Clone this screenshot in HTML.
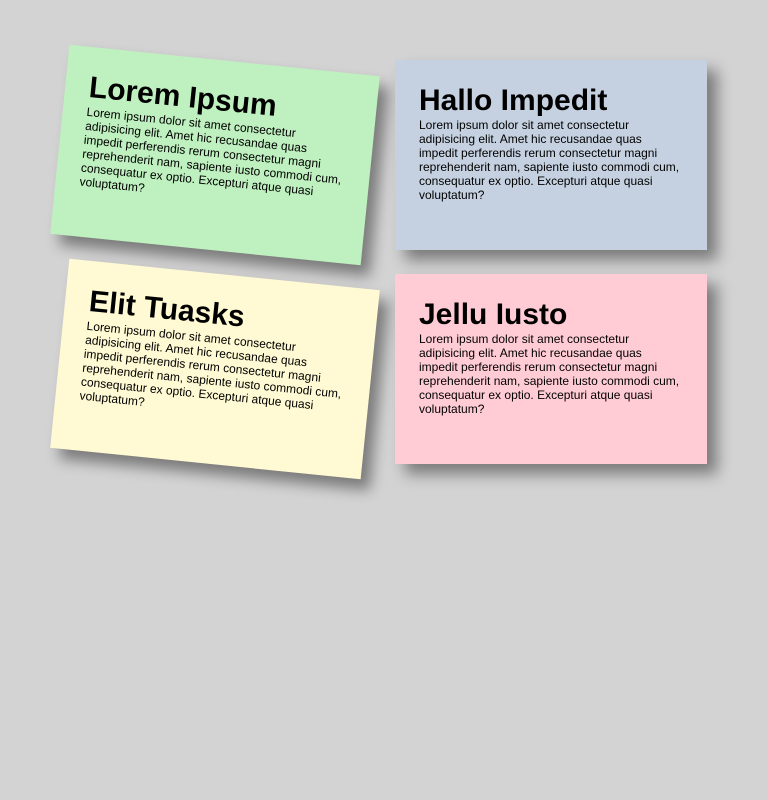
<!DOCTYPE html>
<html><head><style>
html,body{margin:0;padding:0;background:#d3d3d3;width:767px;height:800px;overflow:hidden;font-family:"Liberation Sans",Arial,sans-serif;}
.c{position:absolute;width:264px;height:144px;padding:26px 24px 20px;box-shadow:10px 10px 14px rgba(0,0,0,0.42);color:#000;}
.c h2{margin:0;font-size:30px;line-height:30px;font-weight:bold;}
.c p{margin:2px 0 0;font-size:12px;line-height:14px;}
.r{transform:rotate(5.8deg);}
</style></head><body>
<div class="c r" style="left:59px;top:60px;background:#bff0bf;"><h2>Lorem Ipsum</h2><p>Lorem ipsum dolor sit amet consectetur adipisicing elit. Amet hic recusandae quas impedit perferendis rerum consectetur magni reprehenderit nam, sapiente iusto commodi cum, consequatur ex optio. Excepturi atque quasi voluptatum?</p></div>
<div class="c" style="left:395px;top:60px;background:#c5d1e0;"><h2>Hallo Impedit</h2><p>Lorem ipsum dolor sit amet consectetur adipisicing elit. Amet hic recusandae quas impedit perferendis rerum consectetur magni reprehenderit nam, sapiente iusto commodi cum, consequatur ex optio. Excepturi atque quasi voluptatum?</p></div>
<div class="c r" style="left:59px;top:274px;background:#fffad3;"><h2>Elit Tuasks</h2><p>Lorem ipsum dolor sit amet consectetur adipisicing elit. Amet hic recusandae quas impedit perferendis rerum consectetur magni reprehenderit nam, sapiente iusto commodi cum, consequatur ex optio. Excepturi atque quasi voluptatum?</p></div>
<div class="c" style="left:395px;top:274px;background:#ffccd5;"><h2>Jellu Iusto</h2><p>Lorem ipsum dolor sit amet consectetur adipisicing elit. Amet hic recusandae quas impedit perferendis rerum consectetur magni reprehenderit nam, sapiente iusto commodi cum, consequatur ex optio. Excepturi atque quasi voluptatum?</p></div>
</body></html>
